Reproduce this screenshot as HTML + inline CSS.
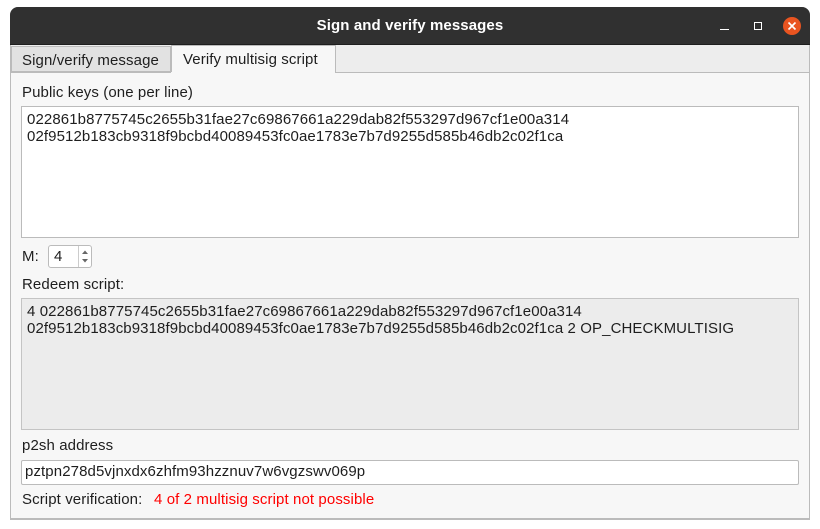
<!DOCTYPE html>
<html><head><style>
body{margin:0;width:820px;height:529px;background:#fff;position:relative;overflow:hidden;font-family:"Liberation Sans","DejaVu Sans",sans-serif;font-size:15px;letter-spacing:0.1px;color:#1e1e1e}
.a{position:absolute;white-space:nowrap}
</style></head><body>
<div class="a" style="left:10px;top:7px;width:800px;height:513px;background:#ededed;border-radius:8px 8px 0 0;border:1px solid #bbb;box-sizing:border-box"></div>
<div class="a" style="left:10px;top:7px;width:800px;height:37px;background:#303030;border-radius:8px 8px 0 0;border-bottom:1px solid #1e1e1e"></div>
<div class="a" style="left:0;top:17px;width:820px;text-align:center;color:#fff;font-weight:bold;font-size:15px">Sign and verify messages</div>
<div class="a" style="left:720px;top:29px;width:9px;height:1px;background:#fff"></div>
<div class="a" style="left:754px;top:22px;width:6px;height:6px;border:1.5px solid #fff"></div>
<div class="a" style="left:783px;top:17px;width:18px;height:18px;border-radius:50%;background:#e95420"></div>
<svg class="a" style="left:783px;top:17px" width="18" height="18"><path d="M5.5 5.5L12.5 12.5M12.5 5.5L5.5 12.5" stroke="#fff" stroke-width="1.6"/></svg>
<div class="a" style="left:11px;top:46px;width:160px;height:26px;background:#e2e2e2;border:1px solid #bbb;box-sizing:border-box"></div>
<div class="a" style="left:22px;top:52px;font-size:15px">Sign/verify message</div>
<div class="a" style="left:171px;top:45px;width:165px;height:28px;background:#f7f7f7;border:1px solid #bbb;border-bottom:none;box-sizing:border-box"></div>
<div class="a" style="left:183px;top:51px;font-size:15px">Verify multisig script</div>
<div class="a" style="left:10px;top:72px;width:800px;height:447px;border:1px solid #bbb;background:#f7f7f7;box-sizing:border-box"></div>
<div class="a" style="left:171px;top:72px;width:164px;height:1px;background:#f7f7f7"></div>
<div class="a" style="left:22px;top:84px">Public keys (one per line)</div>
<div class="a" style="left:21px;top:106px;width:778px;height:132px;background:#fff;border:1px solid #bbb;box-sizing:border-box"></div>
<div class="a" style="left:27px;top:111px;line-height:17px">022861b8775745c2655b31fae27c69867661a229dab82f553297d967cf1e00a314<br>02f9512b183cb9318f9bcbd40089453fc0ae1783e7b7d9255d585b46db2c02f1ca</div>
<div class="a" style="left:22px;top:248px">M:</div>
<div class="a" style="left:48px;top:245px;width:44px;height:23px;background:#fff;border:1px solid #bbb;border-radius:3px;box-sizing:border-box"></div>
<div class="a" style="left:54px;top:248px">4</div>
<div class="a" style="left:78px;top:246px;width:1px;height:21px;background:#ccc"></div>
<svg class="a" style="left:79px;top:246px" width="12" height="21"><path d="M3 8L6 4.5L9 8ZM3 13L6 16.5L9 13Z" fill="#666"/></svg>
<div class="a" style="left:22px;top:276px">Redeem script:</div>
<div class="a" style="left:21px;top:298px;width:778px;height:132px;background:#ececec;border:1px solid #c4c4c4;box-sizing:border-box"></div>
<div class="a" style="left:27px;top:303px;line-height:17px">4 022861b8775745c2655b31fae27c69867661a229dab82f553297d967cf1e00a314<br>02f9512b183cb9318f9bcbd40089453fc0ae1783e7b7d9255d585b46db2c02f1ca 2 OP_CHECKMULTISIG</div>
<div class="a" style="left:22px;top:437px">p2sh address</div>
<div class="a" style="left:21px;top:460px;width:778px;height:25px;background:#fff;border:1px solid #bbb;border-radius:2px;box-sizing:border-box"></div>
<div class="a" style="left:25px;top:463px">pztpn278d5vjnxdx6zhfm93hzznuv7w6vgzswv069p</div>
<div class="a" style="left:22px;top:491px">Script verification:</div>
<div class="a" style="left:154px;top:491px;color:#f00">4 of 2 multisig script not possible</div>
</body></html>
